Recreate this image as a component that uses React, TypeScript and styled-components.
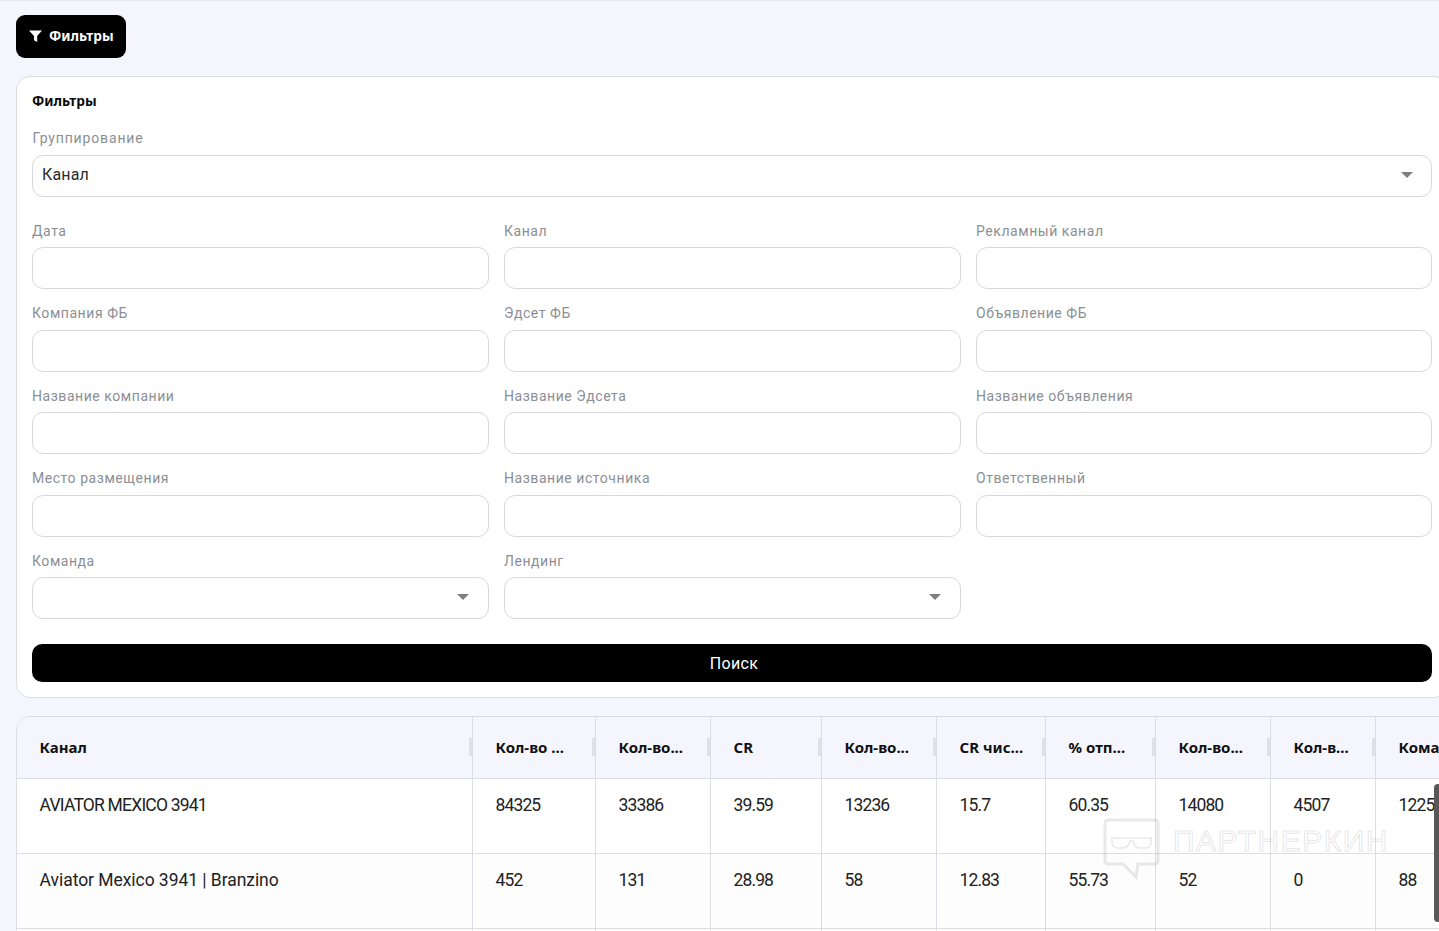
import React from "react";
import styled, { createGlobalStyle } from "styled-components";

const Global = createGlobalStyle`
  html, body { margin: 0; padding: 0; height: 100%; overflow: hidden; background: #f5f5fd; }
  * { box-sizing: border-box; }
  body { font-family: "Noto Sans", "Liberation Sans", sans-serif; color: #1c1c1c; }
`;

const Page = styled.div`
  position: relative;
  width: 1439px;
  height: 931px;
  overflow: hidden;
  border-top: 1px solid #e9e9ef;
  padding: 14px 0 0 16px;
  background: #f5f5fd;
`;

const FilterToggle = styled.button`
  display: flex;
  align-items: center;
  gap: 7px;
  width: 110px;
  height: 43px;
  padding: 0 0 2px 13px;
  border: 0;
  border-radius: 9px;
  background: #000;
  color: #fff;
  font: 700 13.7px "Noto Sans", sans-serif;
`;

const Card = styled.section`
  width: 1432px;
  margin-top: 18px;
  padding: 15px;
  background: #fff;
  border: 1px solid #dcdce2;
  border-radius: 14px;
`;

const CardTitle = styled.h2`
  margin: 0;
  font: 700 13.7px/18px "Noto Sans", sans-serif;
  color: #0b0b0b;
`;

const Label = styled.label`
  display: block;
  height: 20px;
  margin-bottom: 6.2px;
  font: 400 14px/20px Roboto, sans-serif;
  letter-spacing: 0.55px;
  color: #8b8f94;
`;

const Box = styled.div`
  display: flex;
  align-items: center;
  justify-content: space-between;
  height: 42px;
  padding: 0 19px 3px 9px;
  background: #fff;
  border: 1px solid #d8d8dc;
  border-radius: 11px;
  font: 400 16px Roboto, sans-serif;
  letter-spacing: 0.15px;
  color: #2b2b2b;
`;

const GroupField = styled.div`
  margin-top: 18px;
  & > label { margin-bottom: 7px; padding-left: 0.4px; letter-spacing: 0.85px; }
  & > ${Box} { padding-right: 18px; }
`;

const FieldGrid = styled.div`
  display: grid;
  grid-template-columns: 457px 457px 456px;
  column-gap: 15px;
  row-gap: 14.3px;
  margin-top: 23.9px;
`;

const SearchButton = styled.button`
  display: block;
  width: 100%;
  height: 38px;
  margin-top: 24.9px;
  padding: 2px 0 0 4px;
  border: 0;
  border-radius: 10px;
  background: #000;
  color: #fff;
  font: 400 16px Roboto, sans-serif;
  letter-spacing: 0.3px;
`;

const TableWrap = styled.div`
  width: 1500px;
  margin-top: 18px;
  background: #fff;
  border: 1px solid #dcdce2;
  border-top-left-radius: 14px;
  overflow: hidden;
`;

const COLS = "456px 123px 115px 111px 115px 109px 110px 115px 105px 110px";

const HeadRow = styled.div`
  display: grid;
  grid-template-columns: ${COLS};
  height: 62px;
  background: #f5f5fd;
  border-bottom: 1px solid #dcdce2;
`;

const BodyRow = styled.div<{ $alt?: boolean }>`
  display: grid;
  grid-template-columns: ${COLS};
  height: 75px;
  background: ${(p) => (p.$alt ? "#fdfdfe" : "#fff")};
  border-bottom: 1px solid #dcdce2;
`;

const HeadCell = styled.div`
  position: relative;
  display: flex;
  align-items: center;
  padding: 0 23px 1px 22.6px;
  border-right: 1px solid #dcdce2;
  font: 700 15px "Noto Sans", sans-serif;
  color: #111;
  white-space: nowrap;
  overflow: hidden;
  &::after {
    content: "";
    position: absolute;
    right: 0;
    top: 21px;
    width: 3px;
    height: 18px;
    background: #e0e0e4;
  }
`;

const Cell = styled.div<{ $spacing: number }>`
  padding: 15px 0 0 22.6px;
  border-right: 1px solid #dcdce2;
  font: 400 17.5px/22px Roboto, sans-serif;
  letter-spacing: ${(p) => p.$spacing}px;
  color: #222;
  white-space: nowrap;
`;

const Scroll = styled.div`
  position: absolute;
  right: 0;
  top: 783px;
  width: 5px;
  height: 138px;
  background: #585858;
  border-radius: 4px 0 0 4px;
`;

const Watermark = styled.div`
  position: absolute;
  left: 1102px;
  top: 816px;
  display: flex;
  align-items: flex-start;
  gap: 12px;
  pointer-events: none;
`;

const WatermarkText = styled.span`
  margin-top: 6px;
  font: 400 30px/36px "Liberation Sans", sans-serif;
  letter-spacing: 1.5px;
  color: transparent;
  -webkit-text-stroke: 1px rgba(120, 120, 130, 0.2);
`;

const Funnel = () => (
  <svg width="13" height="12" viewBox="0 0 13 12">
    <path d="M0 0.5h13L8.2 6v6L5 10.2V6z" fill="#fff" />
  </svg>
);

const Caret = () => (
  <svg width="12" height="6" viewBox="0 0 12 6">
    <path d="M0 0h12L6 6z" fill="#808080" />
  </svg>
);

const Logo = () => (
  <svg width="59" height="64" viewBox="0 0 59 64" fill="none" stroke="rgba(120,120,130,0.16)">
    <path
      strokeWidth="3"
      d="M6 3h47a3 3 0 0 1 3 3v38a3 3 0 0 1-3 3H41l-5 0-2 13-13-13H6a3 3 0 0 1-3-3V6a3 3 0 0 1 3-3z"
    />
    <path
      strokeWidth="1.6"
      d="M9 21h41M10 21v4c0 4 3 6 6 6h5c4 0 6-3 7-7h3c1 4 3 7 7 7h5c3 0 6-2 6-6v-4"
    />
  </svg>
);

const fields: { label: string; select?: boolean }[] = [
  { label: "Дата" },
  { label: "Канал" },
  { label: "Рекламный канал" },
  { label: "Компания ФБ" },
  { label: "Эдсет ФБ" },
  { label: "Объявление ФБ" },
  { label: "Название компании" },
  { label: "Название Эдсета" },
  { label: "Название объявления" },
  { label: "Место размещения" },
  { label: "Название источника" },
  { label: "Ответственный" },
  { label: "Команда", select: true },
  { label: "Лендинг", select: true },
];

const heads = ["Канал", "Кол-во ...", "Кол-во...", "CR", "Кол-во...", "CR чис...", "% отп...", "Кол-во...", "Кол-в...", "Команда"];
const rows = [
  ["AVIATOR MEXICO 3941", "84325", "33386", "39.59", "13236", "15.7", "60.35", "14080", "4507", "1225"],
  ["Aviator Mexico 3941 | Branzino", "452", "131", "28.98", "58", "12.83", "55.73", "52", "0", "88"],
  ["", "", "", "", "", "", "", "", "", ""],
];

const cellSpacing = (rowIndex: number, colIndex: number) => {
  if (colIndex > 0) return -0.9;
  return rowIndex === 0 ? -0.8 : -0.05;
};

export default function App() {
  return (
    <Page>
      <Global />
      <FilterToggle>
        <Funnel />
        Фильтры
      </FilterToggle>
      <Card>
        <CardTitle>Фильтры</CardTitle>
        <GroupField>
          <Label>Группирование</Label>
          <Box>
            Канал
            <Caret />
          </Box>
        </GroupField>
        <FieldGrid>
          {fields.map((f) => (
            <div key={f.label}>
              <Label>{f.label}</Label>
              <Box>
                <span />
                {f.select && <Caret />}
              </Box>
            </div>
          ))}
        </FieldGrid>
        <SearchButton>Поиск</SearchButton>
      </Card>
      <TableWrap>
        <HeadRow>
          {heads.map((h, i) => (
            <HeadCell key={i}>{h}</HeadCell>
          ))}
        </HeadRow>
        {rows.map((r, i) => (
          <BodyRow key={i} $alt={i === 1}>
            {r.map((c, j) => (
              <Cell key={j} $spacing={cellSpacing(i, j)}>
                {c}
              </Cell>
            ))}
          </BodyRow>
        ))}
      </TableWrap>
      <Watermark>
        <Logo />
        <WatermarkText>ПАРТНЕРКИН</WatermarkText>
      </Watermark>
      <Scroll />
    </Page>
  );
}
